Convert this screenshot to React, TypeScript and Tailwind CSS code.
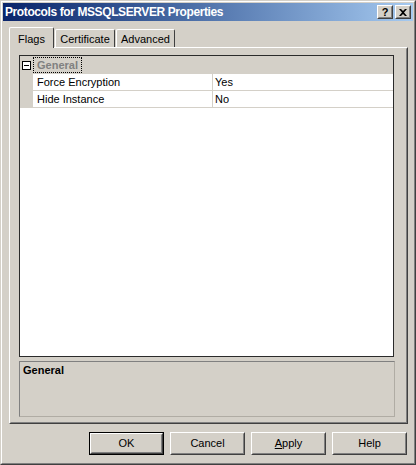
const ui = { fontFamily: '"Liberation Sans", Arial, sans-serif' };

function Raised({ className = "", children }: { className?: string; children?: React.ReactNode }) {
  // classic 3D raised edge: outer white/dark, inner light/gray
  return (
    <div className={`border border-t-white border-l-white border-r-[#404040] border-b-[#404040] ${className}`}>
      <div className="w-full h-full border border-t-[#d4d0c8] border-l-[#d4d0c8] border-r-[#808080] border-b-[#808080] flex items-center justify-center">
        {children}
      </div>
    </div>
  );
}

function Button({ label, isDefault, underline }: { label: string; isDefault?: boolean; underline?: number }) {
  const text =
    underline === undefined ? (
      label
    ) : (
      <>
        {label.slice(0, underline)}
        <span className="underline">{label[underline]}</span>
        {label.slice(underline + 1)}
      </>
    );
  if (isDefault) {
    return (
      <div className="w-[75px] h-[23px] border border-black">
        <Raised className="w-full h-full">
          <span className="text-[11px] text-black">{text}</span>
        </Raised>
      </div>
    );
  }
  return (
    <Raised className="w-[75px] h-[23px]">
      <span className="text-[11px] text-black">{text}</span>
    </Raised>
  );
}

function Tab({ label, active, width }: { label: string; active?: boolean; width: string }) {
  if (active) {
    return (
      <div className={`${width} h-[21px] bg-[#d4d0c8] border-t border-l border-white border-r border-r-[#404040] rounded-t-[2px] flex justify-center pt-[3px] relative z-10`}>
        <span className="text-[11px] text-black">{label}</span>
      </div>
    );
  }
  return (
    <div className={`${width} h-[18px] mb-px bg-[#d4d0c8] border-t border-l border-white border-r border-r-[#404040] rounded-t-[2px] flex justify-center pt-[1px]`}>
      <span className="text-[11px] text-black">{label}</span>
    </div>
  );
}

function PropRow({ name, value }: { name: string; value: string }) {
  return (
    <div className="flex h-[17px]">
      <div className="w-[13px] bg-[#d4d0c8]" />
      <div className="flex flex-1 bg-white border-b border-[#d4d0c8]">
        <div className="w-[180px] border-r border-[#d4d0c8] pl-[4px] text-[11px] leading-[16px] text-black">{name}</div>
        <div className="flex-1 pl-[2px] text-[11px] leading-[16px] text-black">{value}</div>
      </div>
    </div>
  );
}

export default function App() {
  return (
    <div style={ui} className="w-[416px] h-[465px] bg-[#d4d0c8] border border-t-[#d4d0c8] border-l-[#d4d0c8] border-r-[#404040] border-b-[#404040]">
      <div className="h-full border border-t-white border-l-white border-r-[#808080] border-b-[#808080] p-px flex flex-col">
        {/* title bar */}
        <div className="h-[18px] flex items-center bg-gradient-to-r from-[#0a246a] to-[#a6caf0] pl-[2px] pr-[2px]">
          <span className="flex-1 text-white font-bold text-[12px] tracking-[-0.4px] leading-none">Protocols for MSSQLSERVER Properties</span>
          <Raised className="w-[16px] h-[14px] bg-[#d4d0c8]">
            <span className="text-[11px] font-bold text-black leading-none">?</span>
          </Raised>
          <Raised className="w-[16px] h-[14px] bg-[#d4d0c8] ml-[2px]">
            <svg width="8" height="7" viewBox="0 0 8 7">
              <path d="M0 0h2l2 2 2-2h2L5 3.5 8 7H6L4 5 2 7H0l3-3.5z" fill="#000" />
            </svg>
          </Raised>
        </div>

        {/* body */}
        <div className="flex-1 flex flex-col pl-[6px] pr-[5px] pt-[6px]">
          <div className="flex items-end h-[21px] relative z-10">
            <Tab label="Flags" active width="w-[45px]" />
            <div className="w-px" />
            <Tab label="Certificate" width="w-[60px]" />
            <div className="w-px" />
            <Tab label="Advanced" width="w-[59px]" />
          </div>

          <div className="-mt-px h-[377px] border border-t-white border-l-white border-r-[#404040] border-b-[#404040]">
            <div className="h-full border border-transparent border-r-[#808080] border-b-[#808080] pl-[8px] pr-[2px] pt-[6px] flex flex-col">
              {/* property grid */}
              <div className="w-[375px] h-[302px] border border-[#2b2b2b] bg-white flex flex-col">
                <div className="h-[18px] bg-[#d4d0c8] flex items-center">
                  <div className="w-[13px] flex items-center pl-[2px]">
                    <div className="w-[9px] h-[9px] border border-black bg-white flex items-center justify-center">
                      <div className="w-[5px] h-px bg-black" />
                    </div>
                  </div>
                  <div className="h-[16px] border border-dotted border-black px-[3px] flex items-center">
                    <span className="text-[11px] font-bold text-[#808080]">General</span>
                  </div>
                </div>
                <PropRow name="Force Encryption" value="Yes" />
                <PropRow name="Hide Instance" value="No" />
              </div>

              {/* description */}
              <div className="mt-[4px] w-[376px] h-[56px] border border-t-[#808080] border-l-[#808080] border-r-[#b0aca4] border-b-[#b0aca4] px-[3px] pt-0 leading-[14px]">
                <span className="text-[11px] font-bold text-black leading-[14px]">General</span>
              </div>
            </div>
          </div>

          <div className="flex justify-end gap-[6px] mt-[8px] mr-px">
            <Button label="OK" isDefault />
            <Button label="Cancel" />
            <Button label="Apply" underline={0} />
            <Button label="Help" />
          </div>
        </div>
      </div>
    </div>
  );
}
